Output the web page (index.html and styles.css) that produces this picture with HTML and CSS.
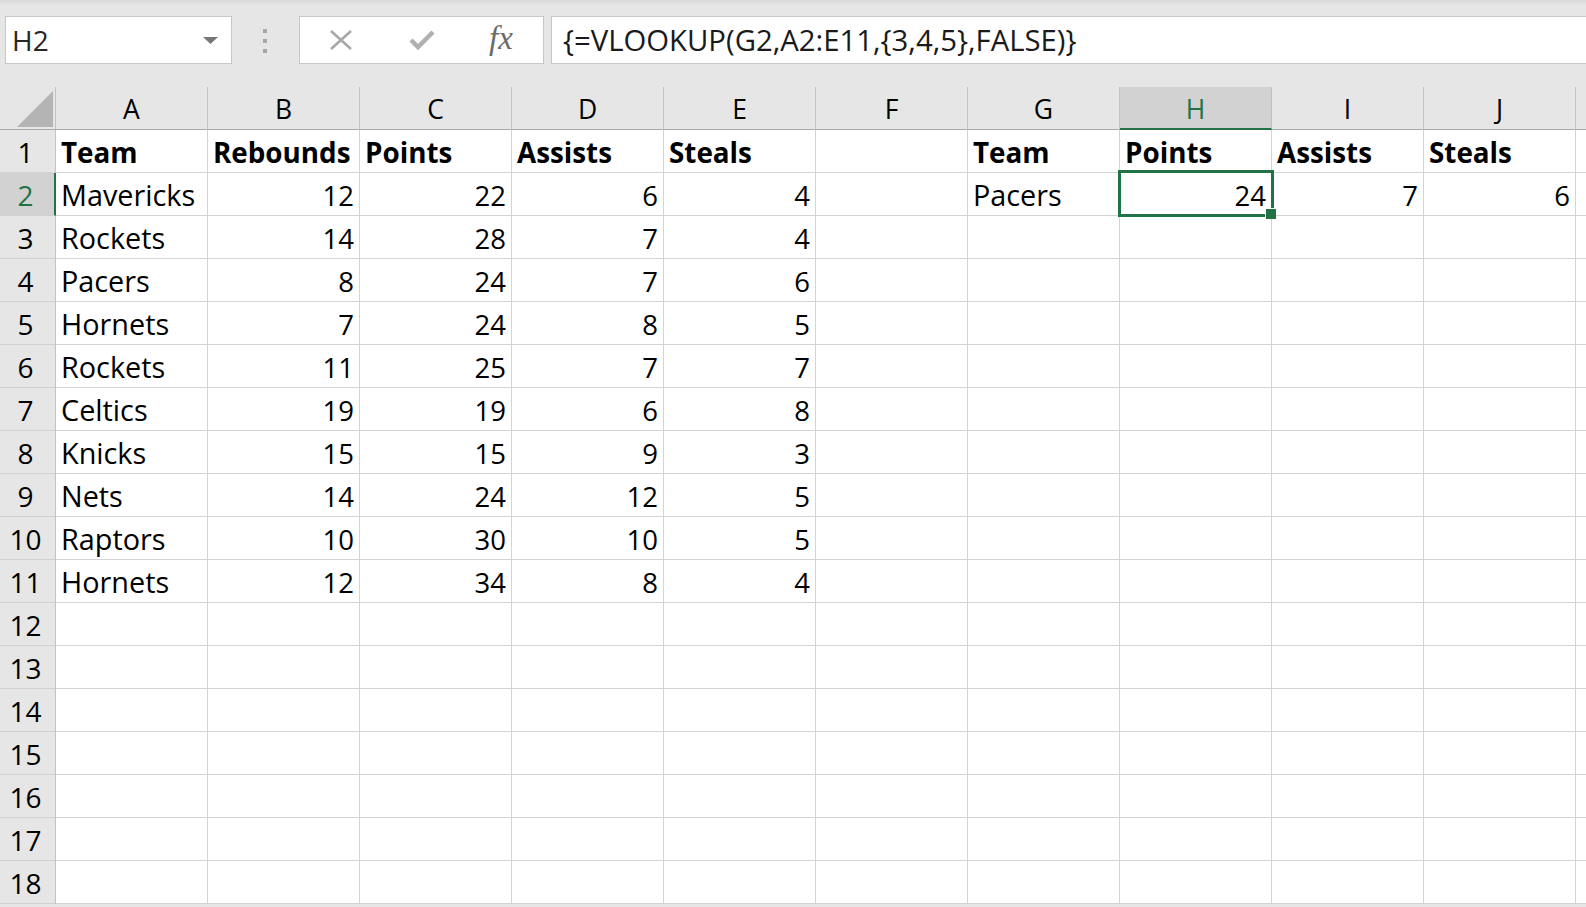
FILE: index.html
```html
<!DOCTYPE html>
<html lang="en">
<head>
<meta charset="utf-8">
<title>Book1 - Excel</title>
<link rel="stylesheet" href="styles.css">
</head>
<body>
<div class="app">
  <div class="toolbar">
    <div class="namebox">
      <span class="namebox-text">H2</span>
      <svg class="namebox-arrow" width="15" height="7" viewBox="0 0 15 7"><path d="M0 0H15L7.5 7Z"/></svg>
    </div>
    <div class="grip"><span></span><span></span><span></span></div>
    <div class="fbuttons">
      <svg class="btn-cancel" width="24" height="20" viewBox="0 0 24 20"><path d="M2 1L22 19M22 1L2 19"/></svg>
      <svg class="btn-enter" width="26" height="22" viewBox="0 0 26 22"><path d="M2 11L9 18L24 3"/></svg>
      <span class="btn-fx">fx</span>
    </div>
    <div class="formula">{=VLOOKUP(G2,A2:E11,{3,4,5},FALSE)}</div>
  </div>

  <div class="sheet">
    <div class="row head">
      <div class="corner"><svg width="36" height="36" viewBox="0 0 36 36"><path d="M36 0V36H0Z"/></svg></div>
      <div class="ch">A</div><div class="ch">B</div><div class="ch">C</div><div class="ch">D</div><div class="ch">E</div><div class="ch">F</div><div class="ch">G</div><div class="ch sel">H</div><div class="ch">I</div><div class="ch">J</div><div class="ch"></div>
    </div>

    <div class="row">
      <div class="rh">1</div>
      <div class="c b">Team</div><div class="c b">Rebounds</div><div class="c b">Points</div><div class="c b">Assists</div><div class="c b">Steals</div><div class="c"></div><div class="c b">Team</div><div class="c b">Points</div><div class="c b">Assists</div><div class="c b">Steals</div><div class="c"></div>
    </div>
    <div class="row">
      <div class="rh sel">2</div>
      <div class="c">Mavericks</div><div class="c n">12</div><div class="c n">22</div><div class="c n">6</div><div class="c n">4</div><div class="c"></div><div class="c">Pacers</div><div class="c n active">24</div><div class="c n">7</div><div class="c n">6</div><div class="c"></div>
    </div>
    <div class="row">
      <div class="rh">3</div>
      <div class="c">Rockets</div><div class="c n">14</div><div class="c n">28</div><div class="c n">7</div><div class="c n">4</div><div class="c"></div><div class="c"></div><div class="c"></div><div class="c"></div><div class="c"></div><div class="c"></div>
    </div>
    <div class="row">
      <div class="rh">4</div>
      <div class="c">Pacers</div><div class="c n">8</div><div class="c n">24</div><div class="c n">7</div><div class="c n">6</div><div class="c"></div><div class="c"></div><div class="c"></div><div class="c"></div><div class="c"></div><div class="c"></div>
    </div>
    <div class="row">
      <div class="rh">5</div>
      <div class="c">Hornets</div><div class="c n">7</div><div class="c n">24</div><div class="c n">8</div><div class="c n">5</div><div class="c"></div><div class="c"></div><div class="c"></div><div class="c"></div><div class="c"></div><div class="c"></div>
    </div>
    <div class="row">
      <div class="rh">6</div>
      <div class="c">Rockets</div><div class="c n">11</div><div class="c n">25</div><div class="c n">7</div><div class="c n">7</div><div class="c"></div><div class="c"></div><div class="c"></div><div class="c"></div><div class="c"></div><div class="c"></div>
    </div>
    <div class="row">
      <div class="rh">7</div>
      <div class="c">Celtics</div><div class="c n">19</div><div class="c n">19</div><div class="c n">6</div><div class="c n">8</div><div class="c"></div><div class="c"></div><div class="c"></div><div class="c"></div><div class="c"></div><div class="c"></div>
    </div>
    <div class="row">
      <div class="rh">8</div>
      <div class="c">Knicks</div><div class="c n">15</div><div class="c n">15</div><div class="c n">9</div><div class="c n">3</div><div class="c"></div><div class="c"></div><div class="c"></div><div class="c"></div><div class="c"></div><div class="c"></div>
    </div>
    <div class="row">
      <div class="rh">9</div>
      <div class="c">Nets</div><div class="c n">14</div><div class="c n">24</div><div class="c n">12</div><div class="c n">5</div><div class="c"></div><div class="c"></div><div class="c"></div><div class="c"></div><div class="c"></div><div class="c"></div>
    </div>
    <div class="row">
      <div class="rh">10</div>
      <div class="c">Raptors</div><div class="c n">10</div><div class="c n">30</div><div class="c n">10</div><div class="c n">5</div><div class="c"></div><div class="c"></div><div class="c"></div><div class="c"></div><div class="c"></div><div class="c"></div>
    </div>
    <div class="row">
      <div class="rh">11</div>
      <div class="c">Hornets</div><div class="c n">12</div><div class="c n">34</div><div class="c n">8</div><div class="c n">4</div><div class="c"></div><div class="c"></div><div class="c"></div><div class="c"></div><div class="c"></div><div class="c"></div>
    </div>
    <div class="row">
      <div class="rh">12</div>
      <div class="c"></div><div class="c"></div><div class="c"></div><div class="c"></div><div class="c"></div><div class="c"></div><div class="c"></div><div class="c"></div><div class="c"></div><div class="c"></div><div class="c"></div>
    </div>
    <div class="row">
      <div class="rh">13</div>
      <div class="c"></div><div class="c"></div><div class="c"></div><div class="c"></div><div class="c"></div><div class="c"></div><div class="c"></div><div class="c"></div><div class="c"></div><div class="c"></div><div class="c"></div>
    </div>
    <div class="row">
      <div class="rh">14</div>
      <div class="c"></div><div class="c"></div><div class="c"></div><div class="c"></div><div class="c"></div><div class="c"></div><div class="c"></div><div class="c"></div><div class="c"></div><div class="c"></div><div class="c"></div>
    </div>
    <div class="row">
      <div class="rh">15</div>
      <div class="c"></div><div class="c"></div><div class="c"></div><div class="c"></div><div class="c"></div><div class="c"></div><div class="c"></div><div class="c"></div><div class="c"></div><div class="c"></div><div class="c"></div>
    </div>
    <div class="row">
      <div class="rh">16</div>
      <div class="c"></div><div class="c"></div><div class="c"></div><div class="c"></div><div class="c"></div><div class="c"></div><div class="c"></div><div class="c"></div><div class="c"></div><div class="c"></div><div class="c"></div>
    </div>
    <div class="row">
      <div class="rh">17</div>
      <div class="c"></div><div class="c"></div><div class="c"></div><div class="c"></div><div class="c"></div><div class="c"></div><div class="c"></div><div class="c"></div><div class="c"></div><div class="c"></div><div class="c"></div>
    </div>
    <div class="row">
      <div class="rh">18</div>
      <div class="c"></div><div class="c"></div><div class="c"></div><div class="c"></div><div class="c"></div><div class="c"></div><div class="c"></div><div class="c"></div><div class="c"></div><div class="c"></div><div class="c"></div>
    </div>
  </div>
</div>
</body>
</html>
```

FILE: styles.css
```css
* {
  box-sizing: border-box;
}

html, body {
  margin: 0;
  padding: 0;
  width: 1586px;
  height: 907px;
  overflow: hidden;
  background: #e6e6e6;
}

body {
  font-family: "Open Sans", "Noto Sans", sans-serif;
  color: #000;
}

.app {
  width: 1586px;
  height: 907px;
  overflow: hidden;
}

/* ---------- formula bar ---------- */
.toolbar {
  height: 87px;
  padding: 16px 0 0 5px;
  display: flex;
  align-items: flex-start;
  background: linear-gradient(#d8d8d8 0, #e6e6e6 5px, #e6e6e6 100%);
}

.namebox {
  width: 227px;
  height: 48px;
  background: #fff;
  border: 1px solid #c6c6c6;
  display: flex;
  align-items: center;
  justify-content: space-between;
  padding: 0 13px 0 6px;
}

.namebox-text {
  font-size: 28px;
  color: #262626;
  line-height: 1;
}

.namebox-arrow path {
  fill: #777;
}

.grip {
  margin: 13px 0 0 31px;
  width: 4px;
  display: flex;
  flex-direction: column;
  gap: 6px;
}

.grip span {
  width: 4px;
  height: 4px;
  background: #a6a6a6;
}

.fbuttons {
  margin-left: 32px;
  width: 245px;
  height: 48px;
  background: #fff;
  border: 1px solid #c6c6c6;
  display: flex;
  align-items: center;
  padding-left: 29px;
}

.btn-cancel path {
  fill: none;
  stroke: #a8a8a8;
  stroke-width: 2.6;
}

.btn-enter {
  margin-left: 56px;
}

.btn-enter path {
  fill: none;
  stroke: #b0b0b0;
  stroke-width: 4.5;
}

.btn-fx {
  margin-left: 54px;
  font-family: "Liberation Serif", "DejaVu Serif", serif;
  font-style: italic;
  font-size: 33px;
  color: #6b6b6b;
  line-height: 1;
  margin-top: -4px;
}

.formula {
  margin-left: 7px;
  flex: 1;
  height: 48px;
  margin-right: -2px;
  background: #fff;
  border: 1px solid #c6c6c6;
  font-size: 29.3px;
  color: #1a1a1a;
  padding-left: 11px;
  display: flex;
  align-items: center;
  white-space: nowrap;
}

/* ---------- grid ---------- */
.sheet {
  background: #fff;
}

.row {
  display: grid;
  grid-template-columns: 56px repeat(11, 152px);
  height: 43px;
}

.head {
  background: #e6e6e6;
}

.corner {
  border-right: 1px solid #c2c2c2;
  border-bottom: 1px solid #a9a9a9;
  display: flex;
  align-items: flex-end;
  justify-content: flex-end;
  padding: 0 2px 2px 0;
}

.corner path {
  fill: #b4b4b4;
}

.ch {
  border-right: 1px solid #c2c2c2;
  border-bottom: 1px solid #a9a9a9;
  font-size: 26.5px;
  display: flex;
  align-items: center;
  justify-content: center;
  line-height: 1;
  padding-top: 3px;
}

.ch.sel {
  background: #d2d2d2;
  color: #217346;
  border-bottom: 2px solid #217346;
  padding-top: 4px;
}

.rh {
  background: #e6e6e6;
  border-right: 1px solid #c2c2c2;
  border-bottom: 1px solid #d0d0d0;
  font-size: 28px;
  display: flex;
  align-items: center;
  justify-content: center;
  line-height: 1;
  padding: 2px 4px 0 0;
}

.rh.sel {
  background: #d2d2d2;
  color: #217346;
  border-right: 2px solid #217346;
  padding-right: 3px;
}

.c {
  border-right: 1px solid #d4d4d4;
  border-bottom: 1px solid #d4d4d4;
  font-size: 28.8px;
  display: flex;
  align-items: center;
  padding: 3px 5px 0 5px;
  white-space: nowrap;
  overflow: hidden;
  line-height: 1;
}

.c.n {
  justify-content: flex-end;
  font-size: 27.5px;
}

.c.b {
  font-weight: 700;
  font-size: 27.8px;
}

/* active cell outline with fill handle */
.c.active {
  position: relative;
  overflow: visible;
}

.c.active::after {
  content: "";
  position: absolute;
  top: -3px;
  left: -2px;
  right: -3px;
  bottom: -2px;
  border: 3px solid #217346;
  pointer-events: none;
}

.c.active::before {
  content: "";
  position: absolute;
  right: -5px;
  bottom: -4px;
  width: 10px;
  height: 10px;
  background: #217346;
  border: 1px solid #fff;
  border-right: none;
  border-bottom: none;
  z-index: 1;
}
```
